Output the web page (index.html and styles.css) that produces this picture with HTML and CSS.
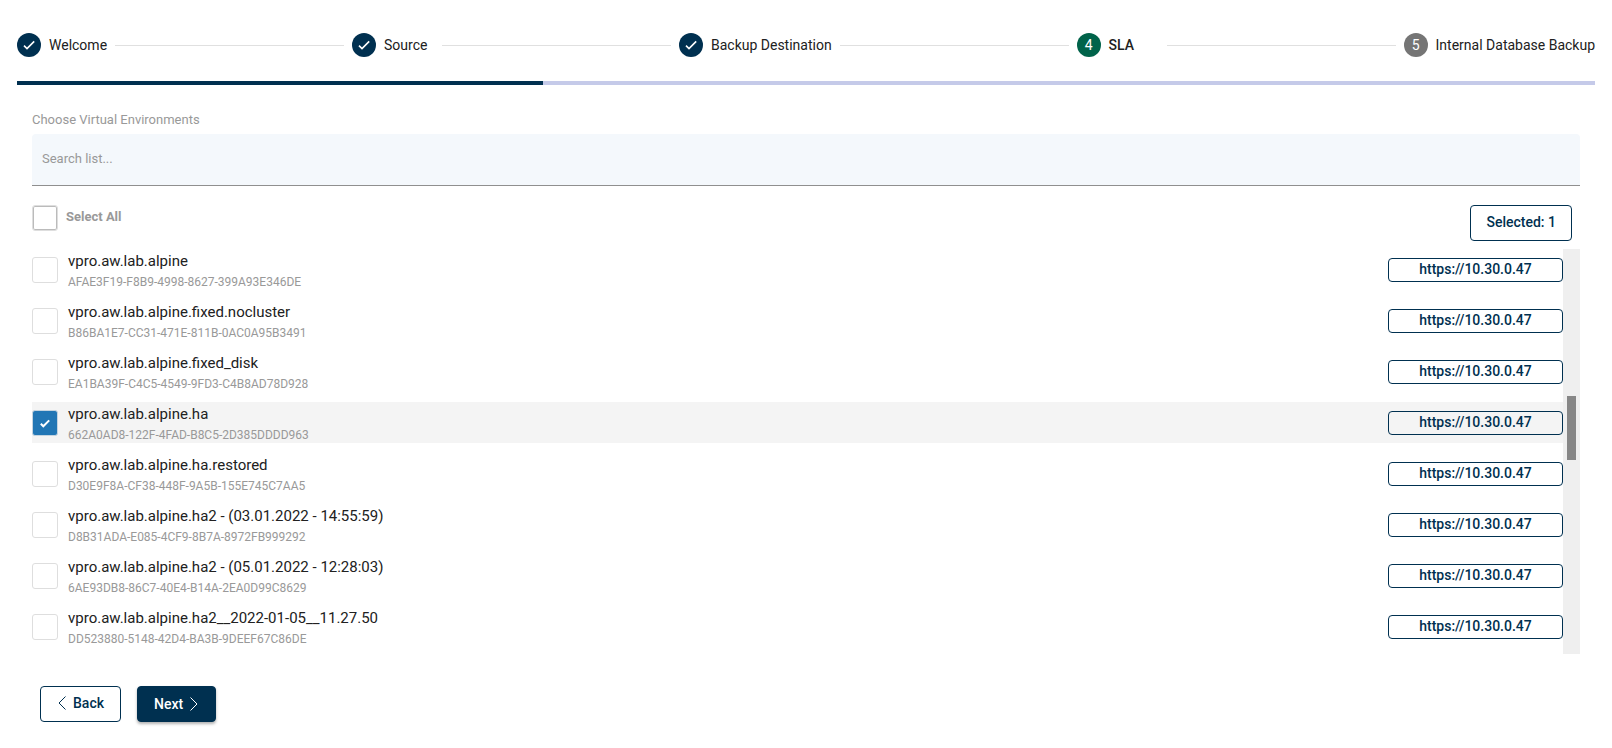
FILE: index.html
```
<!DOCTYPE html>
<html lang="en">
<head>
<meta charset="utf-8">
<title>Setup wizard - SLA</title>
<link rel="stylesheet" href="styles.css">
</head>
<body>
<main class="wizard">
  <div class="stepper">
    <div class="step">
      <span class="step-icon done"><svg width="24" height="24" viewBox="0 0 24 24"><path d="M7 12.6l3 3 7.2-7.2"/></svg></span>
      <span class="step-label">Welcome</span>
    </div>
    <div class="line"></div>
    <div class="step">
      <span class="step-icon done"><svg width="24" height="24" viewBox="0 0 24 24"><path d="M7 12.6l3 3 7.2-7.2"/></svg></span>
      <span class="step-label">Source</span>
    </div>
    <div class="line"></div>
    <div class="step">
      <span class="step-icon done"><svg width="24" height="24" viewBox="0 0 24 24"><path d="M7 12.6l3 3 7.2-7.2"/></svg></span>
      <span class="step-label">Backup Destination</span>
    </div>
    <div class="line"></div>
    <div class="step">
      <span class="step-icon current">4</span>
      <span class="step-label active">SLA</span>
    </div>
    <div class="line"></div>
    <div class="step">
      <span class="step-icon">5</span>
      <span class="step-label">Internal Database Backup</span>
    </div>
  </div>
  <div class="progress"><div class="progress-bar"></div></div>

  <section class="content">
    <label class="field-label" for="search">Choose Virtual Environments</label>
    <input class="search" id="search" type="text" placeholder="Search list...">

    <div class="toolbar">
      <label class="select-all"><input class="check strong" type="checkbox"><span>Select All</span></label>
      <button class="btn selected" type="button">Selected: 1</button>
    </div>

    <div class="list">
      <div class="rows">
        <div class="row">
          <input class="check" type="checkbox" id="vm1">
          <label class="vm" for="vm1"><span class="name">vpro.aw.lab.alpine</span><span class="guid">AFAE3F19-F8B9-4998-8627-399A93E346DE</span></label>
          <span class="host">https://10.30.0.47</span>
        </div>
        <div class="row">
          <input class="check" type="checkbox" id="vm2">
          <label class="vm" for="vm2"><span class="name">vpro.aw.lab.alpine.fixed.nocluster</span><span class="guid">B86BA1E7-CC31-471E-811B-0AC0A95B3491</span></label>
          <span class="host">https://10.30.0.47</span>
        </div>
        <div class="row">
          <input class="check" type="checkbox" id="vm3">
          <label class="vm" for="vm3"><span class="name">vpro.aw.lab.alpine.fixed_disk</span><span class="guid">EA1BA39F-C4C5-4549-9FD3-C4B8AD78D928</span></label>
          <span class="host">https://10.30.0.47</span>
        </div>
        <div class="row picked">
          <span class="check-wrap">
            <input class="check" type="checkbox" id="vm4" checked>
            <svg class="tick" width="12" height="10" viewBox="0 0 12 10"><path d="M1.8 5.800l2.500 2.500L10.200 2.400"/></svg>
          </span>
          <label class="vm" for="vm4"><span class="name">vpro.aw.lab.alpine.ha</span><span class="guid">662A0AD8-122F-4FAD-B8C5-2D385DDDD963</span></label>
          <span class="host">https://10.30.0.47</span>
        </div>
        <div class="row">
          <input class="check" type="checkbox" id="vm5">
          <label class="vm" for="vm5"><span class="name">vpro.aw.lab.alpine.ha.restored</span><span class="guid">D30E9F8A-CF38-448F-9A5B-155E745C7AA5</span></label>
          <span class="host">https://10.30.0.47</span>
        </div>
        <div class="row">
          <input class="check" type="checkbox" id="vm6">
          <label class="vm" for="vm6"><span class="name">vpro.aw.lab.alpine.ha2 - (03.01.2022 - 14:55:59)</span><span class="guid">D8B31ADA-E085-4CF9-8B7A-8972FB999292</span></label>
          <span class="host">https://10.30.0.47</span>
        </div>
        <div class="row">
          <input class="check" type="checkbox" id="vm7">
          <label class="vm" for="vm7"><span class="name">vpro.aw.lab.alpine.ha2 - (05.01.2022 - 12:28:03)</span><span class="guid">6AE93DB8-86C7-40E4-B14A-2EA0D99C8629</span></label>
          <span class="host">https://10.30.0.47</span>
        </div>
        <div class="row">
          <input class="check" type="checkbox" id="vm8">
          <label class="vm" for="vm8"><span class="name">vpro.aw.lab.alpine.ha2__2022-01-05__11.27.50</span><span class="guid">DD523880-5148-42D4-BA3B-9DEEF67C86DE</span></label>
          <span class="host">https://10.30.0.47</span>
        </div>
      </div>
      <div class="scrollbar"><div class="thumb"></div></div>
    </div>

    <div class="actions">
      <button class="btn back" type="button"><svg width="10" height="14" viewBox="-1 0 10 14"><path d="M7.5 .5L1 7l6.500 6.500"/></svg>Back</button>
      <button class="btn next" type="button">Next<svg width="10" height="14" viewBox="-1 0 10 14"><path d="M.5 .5L7 7L.5 13.500"/></svg></button>
    </div>
  </section>
</main>
</body>
</html>
```
FILE: styles.css
```
*{
box-sizing:border-box;
}
body{
margin:0;
background:#fff;
color:#212121;
font-family:Roboto, sans-serif;
font-size:14px;
}
.wizard{
padding:33px 17px 0;
}

/* steps */
.stepper{
display:flex;
align-items:center;
gap:8px;
height:24px;
}
.step{
display:flex;
align-items:center;
gap:8px;
}
.step-icon{
display:flex;
align-items:center;
justify-content:center;
width:24px;
height:24px;
border-radius:50%;
background:#757575;
color:#fff;
}
.step-icon.done{
background:#003050;
}
.step-icon.current{
background:#00634a;
}
.step-icon path{
fill:none;
stroke:#fff;
stroke-width:1.6;
}
.step-label{
min-width:50px;
white-space:nowrap;
}
.step-label.active{
font-weight:500;
}
.line{
flex:1;
border-top:1px solid #e0e0e0;
}
.progress{
height:4px;
margin-top:24px;
background:#c5cae9;
}
.progress-bar{
width:calc(100% / 3);
height:4px;
background:#003050;
}

.content{
padding:0 15px;
}
.field-label{
display:block;
margin-top:25px;
color:#999;
font-size:13px;
line-height:20px;
}
.search{
display:block;
width:100%;
height:52px;
margin-top:4px;
padding:0 10px 2px;
border:0;
border-bottom:1px solid #8f8f8f;
border-radius:4px 4px 0 0;
background:#f4f8fc;
font-family:inherit;
font-size:13px;
}
.search::placeholder{
color:#999;
}
.toolbar{
display:flex;
justify-content:space-between;
align-items:flex-start;
padding:19px 8px 8px 0;
}
.select-all{
display:flex;
gap:8px;
color:#999;
font-size:13px;
font-weight:700;
line-height:24px;
}

.check{
appearance:none;
flex:none;
width:26px;
height:26px;
margin:0;
border:1px solid #dedede;
border-radius:3px;
background:#fff;
}
.check.strong{
box-shadow:inset 0 0 0 1px #bbb;
}
.check:checked{
border-color:#c4d4e0;
background:#2176b5;
}
.check-wrap{
display:grid;
}
.check-wrap > *{
grid-area:1 / 1;
}
.tick{
place-self:center;
pointer-events:none;
}
.tick path{
fill:none;
stroke:#fff;
stroke-width:2;
}

/* list of machines */
.list{
display:flex;
}
.rows{
flex:1;
display:flex;
flex-direction:column;
gap:10px;
padding-bottom:7px;
}
.row{
display:flex;
align-items:center;
height:41px;
}
.picked{
background:#f4f4f4;
}
.vm{
flex:1;
align-self:flex-start;
margin-left:10px;
}
.name, .guid{
display:block;
}
.name{
font-size:15px;
line-height:24px;
}
.guid{
color:#999;
font-size:12px;
line-height:18px;
}
.host{
width:175px;
height:24px;
border:1px solid #003050;
border-radius:4px;
background:#fff;
color:#003050;
font-weight:500;
line-height:20px;
text-align:center;
}
.picked .host{
background:none;
}
.scrollbar{
width:17px;
background:#efefef;
}
.thumb{
width:9px;
height:64px;
margin:147px auto 0;
background:#878787;
}

.btn{
display:flex;
align-items:center;
justify-content:center;
height:36px;
padding:0 16px;
border:1px solid #003050;
border-radius:4px;
background:#fff;
color:#003050;
font-family:inherit;
font-size:14px;
font-weight:500;
}
.btn svg path{
fill:none;
stroke:currentColor;
}
.selected{
padding:0 15px 2px;
}
.actions{
display:flex;
gap:16px;
padding:32px 8px 24px;
}
.back{
gap:6px;
padding-bottom:2px;
}
.next{
gap:6px;
background:#003050;
color:#fff;
box-shadow:0 2px 3px rgba(0,0,0,.3);
}
```
